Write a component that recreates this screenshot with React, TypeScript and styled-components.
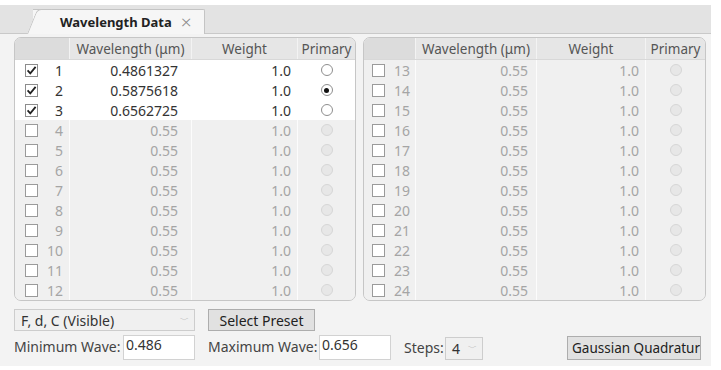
import React from 'react'
import styled, { createGlobalStyle } from 'styled-components'

const GlobalStyle = createGlobalStyle`
  html, body {
    margin: 0;
    padding: 0;
    background: #ffffff;
  }
  body {
    font-family: 'Noto Sans', 'Liberation Sans', sans-serif;
    font-size: 14px;
    color: #333;
  }
`

const Window = styled.div`
  width: 711px;
  padding-top: 5px;
`

const TabStrip = styled.div`
  height: 28px;
  background: #e3e3e3;
  border-bottom: 1px solid #c9c9c9;
  display: flex;
  align-items: flex-end;
  padding-left: 22px;
`

const Tab = styled.div`
  position: relative;
  width: 172px;
  height: 25px;
  margin-left: 11px;
  background: #f6f6f6;
  border-top: 1px solid #c4c4c4;
  border-right: 1px solid #c4c4c4;
  border-top-right-radius: 2px;
  display: flex;
  align-items: center;
  padding-left: 27px;
  box-sizing: border-box;
  margin-bottom: -1px;

  &::before {
    content: '';
    position: absolute;
    left: -6px;
    top: -1px;
    bottom: 0;
    width: 14px;
    background: #f6f6f6;
    border-left: 1px solid #c4c4c4;
    border-top: 1px solid #c4c4c4;
    border-top-left-radius: 5px;
    transform: skewX(-22deg);
    transform-origin: bottom left;
  }
`

const TabTitle = styled.span`
  position: relative;
  font-weight: 700;
  font-size: 13px;
  color: #222;
`

const TabClose = styled.span`
  position: relative;
  margin-left: 9px;
  font-size: 19px;
  line-height: 1;
  font-weight: 300;
  color: #8a8a8a;
`

const Content = styled.div`
  background: #f3f3f3;
  padding: 3px 5px 6px 14px;
`

const Tables = styled.div`
  display: flex;
  gap: 7px;
`

const Table = styled.div<{ $width: number }>`
  width: ${p => p.$width}px;
  border: 1px solid #c6c6c6;
  border-radius: 7px;
  overflow: hidden;
  background: #f1f1f1;
  box-sizing: border-box;
`

const HeaderRow = styled.div<{ $cols: string }>`
  display: grid;
  grid-template-columns: ${p => p.$cols};
  height: 21px;
  background: #e6e6e6;
  border-bottom: 1px solid #d8d8d8;
`

const HeaderCell = styled.div<{ $dark?: boolean }>`
  display: flex;
  align-items: center;
  justify-content: center;
  font-size: 13.5px;
  color: #555;
  background: ${p => (p.$dark ? '#dcdcdc' : 'transparent')};
  border-left: 1px solid #f3f3f3;
  white-space: nowrap;

  &:first-child {
    border-left: none;
  }
`

const Row = styled.div<{ $cols: string; $on: boolean }>`
  display: grid;
  grid-template-columns: ${p => p.$cols};
  height: 20px;
  background: ${p => (p.$on ? '#ffffff' : '#f0f0f0')};
  color: ${p => (p.$on ? '#333' : '#a5a5a5')};
`

const Cell = styled.div<{ $align?: string; $pad?: number }>`
  display: flex;
  align-items: center;
  justify-content: ${p => p.$align || 'flex-end'};
  padding-right: ${p => p.$pad ?? 0}px;
  border-left: 1px solid rgba(255, 255, 255, 0.8);
  white-space: nowrap;

  &:first-child {
    border-left: none;
  }
`

const IndexCell = styled.div<{ $lead: number }>`
  display: flex;
  align-items: center;
  padding-left: ${p => p.$lead}px;
`

const Num = styled.span`
  width: 25px;
  text-align: right;
`

const Box = styled.div<{ $on: boolean }>`
  width: 13px;
  height: 13px;
  box-sizing: border-box;
  border: 1px solid ${p => (p.$on ? '#8c8c8c' : '#9a9a9a')};
  background: #ffffff;
  display: flex;
  align-items: center;
  justify-content: center;
`

const Radio = styled.div<{ $on: boolean; $checked?: boolean }>`
  width: 12px;
  height: 12px;
  box-sizing: border-box;
  border-radius: 50%;
  border: 1px solid ${p => (p.$on ? '#8e8e8e' : '#d6d6d6')};
  background: ${p => (p.$on ? '#ffffff' : '#e7e7e7')};
  display: flex;
  align-items: center;
  justify-content: center;

  &::after {
    content: '';
    display: ${p => (p.$checked ? 'block' : 'none')};
    width: 5px;
    height: 5px;
    border-radius: 50%;
    background: #111;
  }
`

const Controls = styled.div`
  display: grid;
  grid-template-columns: 181px 183px 79px 1fr;
  grid-template-rows: 22px 25px;
  column-gap: 13px;
  row-gap: 4px;
  margin-top: 8px;
  padding-right: 5px;
`

const Dropdown = styled.div<{ $width?: number; $height?: number }>`
  width: ${p => (p.$width ? `${p.$width}px` : '100%')};
  height: ${p => p.$height ?? 22}px;
  box-sizing: border-box;
  border: 1px solid #cdcdcd;
  background: #f0f0f0;
  display: flex;
  align-items: center;
  justify-content: space-between;
  padding: 0 5px 0 6px;
  color: #333;
`

const Chevron = styled.span`
  font-size: 9px;
  color: #a0a0a0;
`

const Button = styled.div<{ $width: number; $height?: number; $center?: boolean }>`
  width: ${p => p.$width}px;
  height: ${p => p.$height ?? 22}px;
  box-sizing: border-box;
  border: 1px solid #adadad;
  background: #e1e1e1;
  display: flex;
  align-items: center;
  justify-content: ${p => (p.$center ? 'center' : 'flex-start')};
  padding-left: ${p => (p.$center ? 0 : 4)}px;
  white-space: nowrap;
  overflow: hidden;
  color: #222;
  font-size: ${p => (p.$center ? 14 : 13.5)}px;
`

const Field = styled.div`
  display: flex;
  align-items: flex-start;
  justify-content: space-between;
`

const StepsField = styled.div`
  display: flex;
  align-items: center;
  justify-content: space-between;
  padding-top: 1px;
`

const Label = styled.span`
  color: #444;
  white-space: nowrap;
  line-height: 24px;
`

const Input = styled.div`
  width: 72px;
  height: 25px;
  box-sizing: border-box;
  border: 1px solid #d2d2d2;
  background: #ffffff;
  padding: 0 0 0 2px;
  color: #333;
  line-height: 18px;
`

const EndCell = styled.div`
  display: flex;
  justify-content: flex-end;
  align-items: center;
  padding-top: 1px;
`

const Check = () => (
  <svg width="11" height="11" viewBox="0 0 11 11">
    <path d="M1.6 5.4 L4.3 8.3 L9.6 1.9" fill="none" stroke="#222" strokeWidth="1.8" />
  </svg>
)

interface Wave {
  id: number
  value: string
  weight: string
  on: boolean
  primary?: boolean
}

const waves: Wave[] = Array.from({ length: 24 }, (_, i) => ({
  id: i + 1,
  value: ['0.4861327', '0.5875618', '0.6562725'][i] || '0.55',
  weight: '1.0',
  on: i < 3,
  primary: i === 1,
}))

interface TableProps {
  rows: Wave[]
  cols: string
  width: number
  lead: number
  valuePad: number
}

const WaveTable: React.FC<TableProps> = ({ rows, cols, width, lead, valuePad }) => (
  <Table $width={width}>
    <HeaderRow $cols={cols}>
      <HeaderCell $dark />
      <HeaderCell>Wavelength (μm)</HeaderCell>
      <HeaderCell>Weight</HeaderCell>
      <HeaderCell>Primary</HeaderCell>
    </HeaderRow>
    {rows.map(w => (
      <Row key={w.id} $cols={cols} $on={w.on}>
        <IndexCell $lead={lead}>
          <Box $on={w.on}>{w.on && <Check />}</Box>
          <Num>{w.id}</Num>
        </IndexCell>
        <Cell $pad={valuePad}>{w.value}</Cell>
        <Cell $pad={6}>{w.weight}</Cell>
        <Cell $align="center">
          <Radio $on={w.on} $checked={w.primary} />
        </Cell>
      </Row>
    ))}
  </Table>
)

export default function App() {
  return (
    <>
      <GlobalStyle />
      <Window>
        <TabStrip>
          <Tab>
            <TabTitle>Wavelength Data</TabTitle>
            <TabClose>×</TabClose>
          </Tab>
        </TabStrip>
        <Content>
          <Tables>
            <WaveTable rows={waves.slice(0, 12)} cols="54px 122px 106px 1fr" width={342} lead={10} valuePad={13} />
            <WaveTable rows={waves.slice(12)} cols="51px 121px 109px 1fr" width={343} lead={8} valuePad={8} />
          </Tables>
          <Controls>
            <Dropdown>
              F, d, C (Visible)
              <Chevron>﹀</Chevron>
            </Dropdown>
            <div>
              <Button $width={107} $center>Select Preset</Button>
            </div>
            <div />
            <div />
            <Field>
              <Label>Minimum Wave:</Label>
              <Input>0.486</Input>
            </Field>
            <Field>
              <Label>Maximum Wave:</Label>
              <Input>0.656</Input>
            </Field>
            <StepsField>
              <Label>Steps:</Label>
              <Dropdown $width={38} $height={23}>
                4
                <Chevron>﹀</Chevron>
              </Dropdown>
            </StepsField>
            <EndCell>
              <Button $width={134} $height={24}>Gaussian Quadrature</Button>
            </EndCell>
          </Controls>
        </Content>
      </Window>
    </>
  )
}
